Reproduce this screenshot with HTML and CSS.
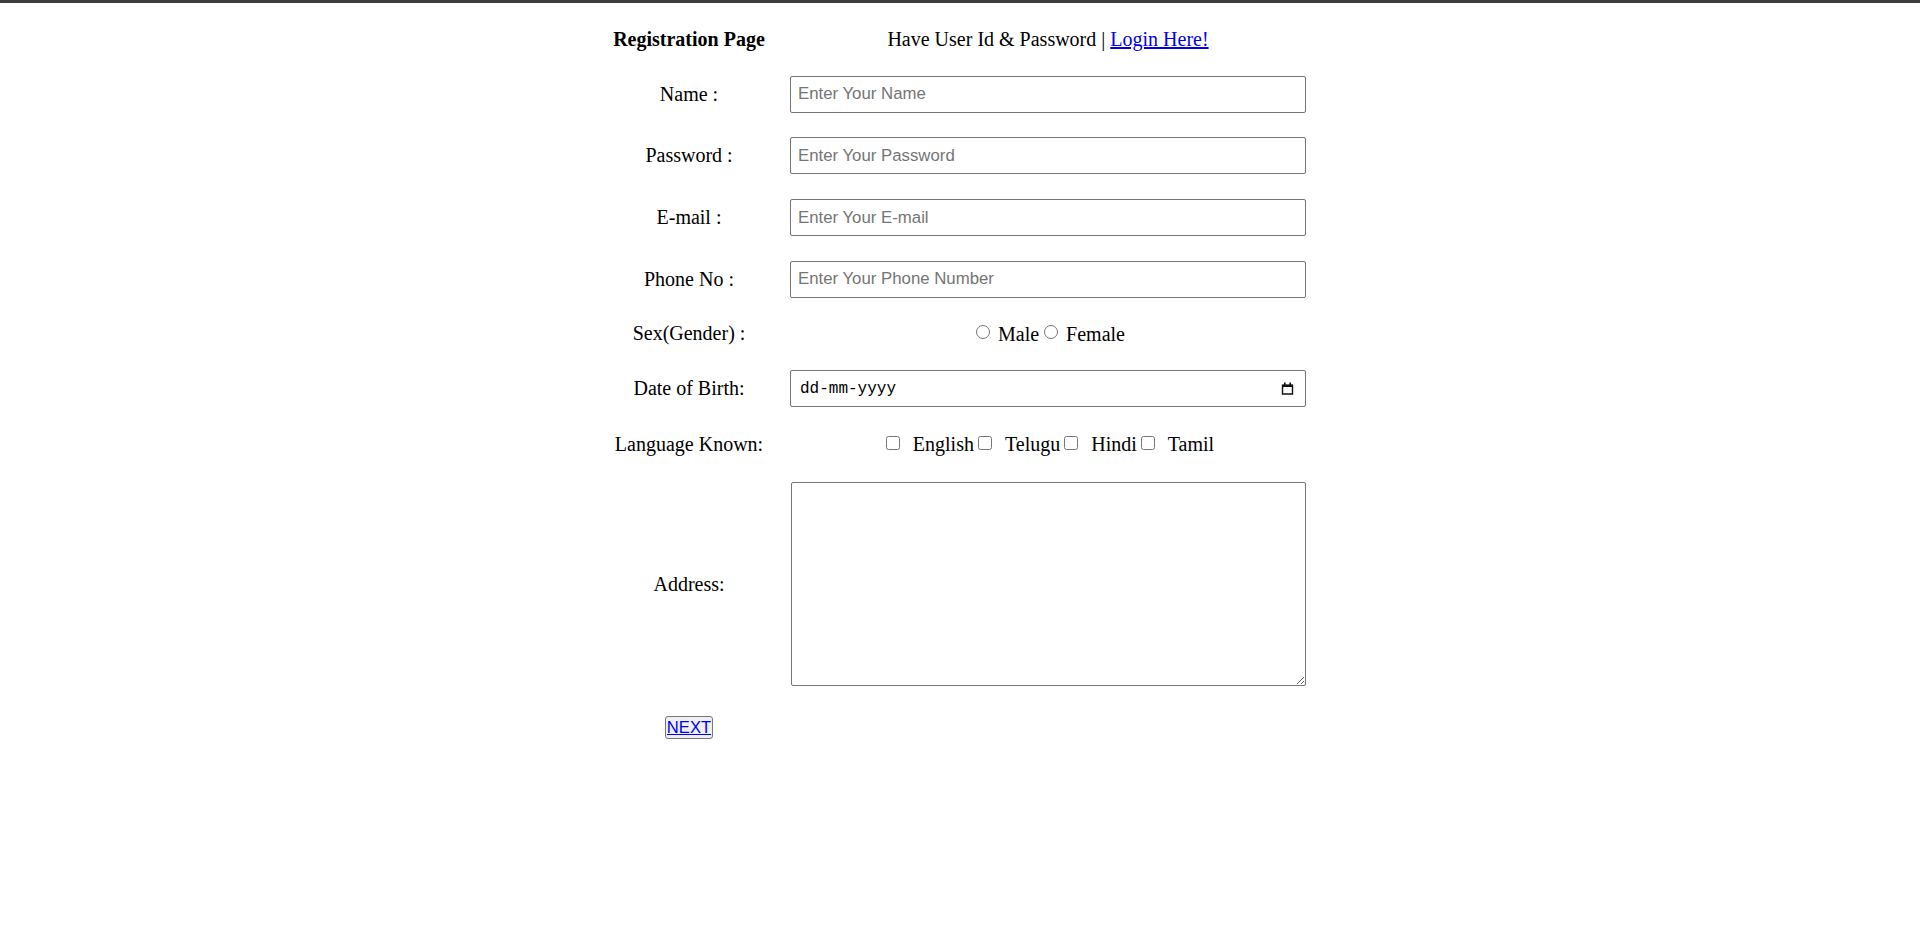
FILE: index.html
```html
<!DOCTYPE html>
<html lang="en">
<head>
<meta charset="utf-8">
<title>Registration Page</title>
<link rel="stylesheet" href="styles.css">
</head>
<body>
<div class="topbar"></div>
<form class="reg">
  <div class="label head">Registration Page</div>
  <div class="field center head-note">Have User Id &amp; Password | <a href="#">Login Here!</a></div>

  <label class="label" for="name">Name :</label>
  <input class="text" id="name" type="text" placeholder="Enter Your Name">

  <label class="label" for="pass">Password :</label>
  <input class="text" id="pass" type="password" placeholder="Enter Your Password">

  <label class="label" for="mail">E-mail :</label>
  <input class="text" id="mail" type="text" placeholder="Enter Your E-mail">

  <label class="label" for="phone">Phone No :</label>
  <input class="text" id="phone" type="text" placeholder="Enter Your Phone Number">

  <div class="label">Sex(Gender) :</div>
  <div class="field center"><input class="tick radio" type="radio" name="sex"> Male<input class="tick radio" type="radio" name="sex"> Female</div>

  <div class="label">Date of Birth:</div>
  <div class="date"><span class="date-text">dd-mm-yyyy</span><svg class="cal" width="13" height="13" viewBox="0 0 13 13"><path d="M1.5 3.5h10v8.5h-10z" fill="none" stroke="#111" stroke-width="1.4"/><rect x="1" y="2.5" width="11" height="2.5" fill="#111"/><rect x="3" y="0.5" width="1.6" height="3" fill="#111"/><rect x="8.4" y="0.5" width="1.6" height="3" fill="#111"/></svg></div>

  <div class="label">Language Known:</div>
  <div class="field center"><input class="tick check" type="checkbox"> &nbsp;English<input class="tick check" type="checkbox"> &nbsp;Telugu<input class="tick check" type="checkbox"> &nbsp;Hindi<input class="tick check" type="checkbox"> &nbsp;Tamil</div>

  <label class="label" for="addr">Address:</label>
  <textarea class="area" id="addr"></textarea>

  <div class="label next-cell"><button class="next" type="button"><a href="#">NEXT</a></button></div>
</form>
</body>
</html>
```
FILE: styles.css
```css
html, body {
  margin: 0;
  padding: 0;
  background: #ffffff;
}

body {
  font-family: "Liberation Serif", "Times New Roman", serif;
  font-size: 20px;
  color: #000000;
}

.topbar {
  height: 3px;
  background: #3d3d3d;
}

.reg {
  display: grid;
  grid-template-columns: 154px 516px;
  grid-template-rows: 26px 37px 37px 37px 37px 23px 37px 26px 204px auto;
  column-gap: 24px;
  row-gap: 24.7px;
  align-items: center;
  margin: 22px 0 0 calc(50% - 348px);
  width: 694px;
}

.label {
  text-align: center;
  line-height: 23px;
}

.head,
.head-note {
  position: relative;
  top: 1px;
}

.head {
  font-weight: bold;
}

.field {
  line-height: 23px;
  white-space: nowrap;
}

.center {
  text-align: center;
}

a {
  color: #0000ee;
  text-decoration: underline;
}

.text {
  box-sizing: border-box;
  width: 516px;
  height: 37px;
  margin: 0;
  padding: 0 7px;
  border: 1px solid #767676;
  border-radius: 2px;
  font-family: "Liberation Sans", Arial, sans-serif;
  font-size: 16.8px;
  color: #000;
  background: #fff;
}

.text::placeholder {
  color: #757575;
}

.tick {
  width: 14px;
  height: 14px;
}

.radio {
  margin: 3px 3px 0 5px;
  vertical-align: 2px;
}

.check {
  margin: 3px 3px 3px 4px;
  vertical-align: 1px;
}

.date {
  box-sizing: border-box;
  width: 516px;
  height: 37px;
  border: 1px solid #767676;
  border-radius: 2px;
  display: flex;
  align-items: center;
  justify-content: space-between;
  padding: 0 11px 0 9px;
}

.date-text {
  font-family: "Liberation Mono", "Courier New", monospace;
  font-size: 16px;
  color: #000;
}

.cal {
  display: block;
}

.area {
  box-sizing: border-box;
  width: 515px;
  height: 204px;
  margin: -1px 0 0 1px;
  border: 1px solid #767676;
  border-radius: 2px;
  resize: both;
  font-family: "Liberation Mono", monospace;
  font-size: 16px;
}

.next-cell {
  display: flex;
  justify-content: center;
  align-self: start;
  padding-top: 5px;
}

.next {
  margin: 0;
  padding: 1px;
  border: 1px solid #767676;
  border-radius: 3px;
  background: #efefef;
  font-family: "Liberation Sans", Arial, sans-serif;
  font-size: 16.6px;
  line-height: 19px;
}
```
